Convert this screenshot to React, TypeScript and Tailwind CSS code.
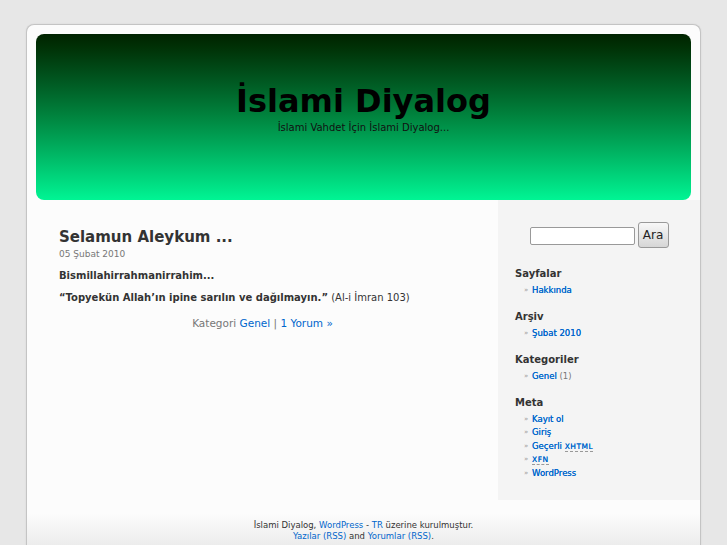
const font = { fontFamily: '"DejaVu Sans", Verdana, sans-serif' };

function Widget({ title, first, children }: { title: string; first?: boolean; children: React.ReactNode }) {
  return (
    <div className={first ? "mt-[18.5px]" : "mt-[12.5px]"}>
      <h2 className="text-[10px] leading-[13px] font-bold text-[#333]">{title}</h2>
      <ul className="mt-[4px] pl-[9px]">{children}</ul>
    </div>
  );
}

function Item({ children }: { children: React.ReactNode }) {
  return (
    <li className="flex h-[13.5px] items-center text-[8.5px] leading-[13.5px] text-[#777]">
      <span className="w-[8px] text-[7px] leading-[13.5px] text-[#999]">»</span>
      <span className="leading-[13.5px]">{children}</span>
    </li>
  );
}

const link = "text-[#0066cc] [text-shadow:0_0_0.3px_#0066cc]";

export default function App() {
  return (
    <div className="min-h-[545px] bg-[#e7e7e7] pt-[24px]" style={font}>
      <div className="mx-auto w-[675px] rounded-t-[8px] border border-b-0 border-[#c4c4c4] bg-[#fcfcfc] shadow-[0_0_2px_rgba(0,0,0,0.08)]">
        <div className="px-[9px] pt-[9px]">
          <div className="flex h-[166px] flex-col items-center rounded-[8px] bg-gradient-to-b from-[#002300] via-[#00853f] to-[#00f594] pt-[48px]">
            <h1 className="text-[32px] font-bold leading-[38px] text-black">İslami Diyalog</h1>
            <div className="mt-[1px] text-[10px] leading-[13px] text-[#111]">İslami Vahdet İçin İslami Diyalog...</div>
          </div>
        </div>

        <div className="flex h-[300px]">
          <div className="flex-1 px-[32px] pt-[28px] text-[#333]">
            <h2 className="text-[15px] font-bold leading-[18px] text-[#333]">Selamun Aleykum ...</h2>
            <div className="mt-[2px] text-[9px] leading-[12px] text-[#777]">05 Şubat 2010</div>
            <p className="mt-[9px] text-[10px] font-bold leading-[14px]">Bismillahirrahmanirrahim...</p>
            <p className="mt-[8px] text-[10px] leading-[14px]">
              <strong>“Topyekün Allah’ın ipine sarılın ve dağılmayın.”</strong> (Al-i İmran 103)
            </p>
            <p className="mt-[11px] text-center text-[10.5px] leading-[14px] text-[#777]">
              Kategori <span className="text-[#0066cc]">Genel</span> | <span className="text-[#0066cc]">1 Yorum »</span>
            </p>
          </div>

          <div className="w-[202px] bg-[#f4f4f4] pl-[17px] pt-[22px]">
            <form className="flex items-center justify-center gap-[3px] pr-[17px]">
              <input className="mt-[1px] h-[18px] w-[105px] rounded-[2px] border border-[#999] bg-white" />
              <button
                type="button"
                className="h-[26px] w-[31px] rounded-[3px] border border-[#999] bg-gradient-to-b from-[#f8f8f8] to-[#d6d6d6] text-[12px] leading-[24px] text-[#222]"
              >
                Ara
              </button>
            </form>
            <Widget title="Sayfalar" first>
              <Item><span className={link}>Hakkında</span></Item>
            </Widget>
            <Widget title="Arşiv">
              <Item><span className={link}>Şubat 2010</span></Item>
            </Widget>
            <Widget title="Kategoriler">
              <Item><span className={link}>Genel</span>&nbsp;(1)</Item>
            </Widget>
            <Widget title="Meta">
              <Item><span className={link}>Kayıt ol</span></Item>
              <Item><span className={link}>Giriş</span></Item>
              <Item>
                <span className={link}>
                  Geçerli <span className="border-b border-dashed border-[#999] text-[7.5px] tracking-[0.07em]">XHTML</span>
                </span>
              </Item>
              <Item>
                <span className={`${link} border-b border-dashed border-[#999] text-[7.5px] tracking-[0.07em]`}>XFN</span>
              </Item>
              <Item><span className={link}>WordPress</span></Item>
            </Widget>
          </div>
        </div>

        <div className="h-[52px] bg-[linear-gradient(to_bottom,#fcfcfc_0%,#fcfcfc_25%,#e9e9e9_100%)] pt-[20px] text-center text-[8.5px] leading-[11px] text-[#333]">
          <p>
            İslami Diyalog, <span className="text-[#0066cc]">WordPress</span> - <span className="text-[#0066cc]">TR</span> üzerine kurulmuştur.
          </p>
          <p>
            <span className="text-[#0066cc]">Yazılar (RSS)</span> and <span className="text-[#0066cc]">Yorumlar (RSS)</span>.
          </p>
        </div>
      </div>
    </div>
  );
}
